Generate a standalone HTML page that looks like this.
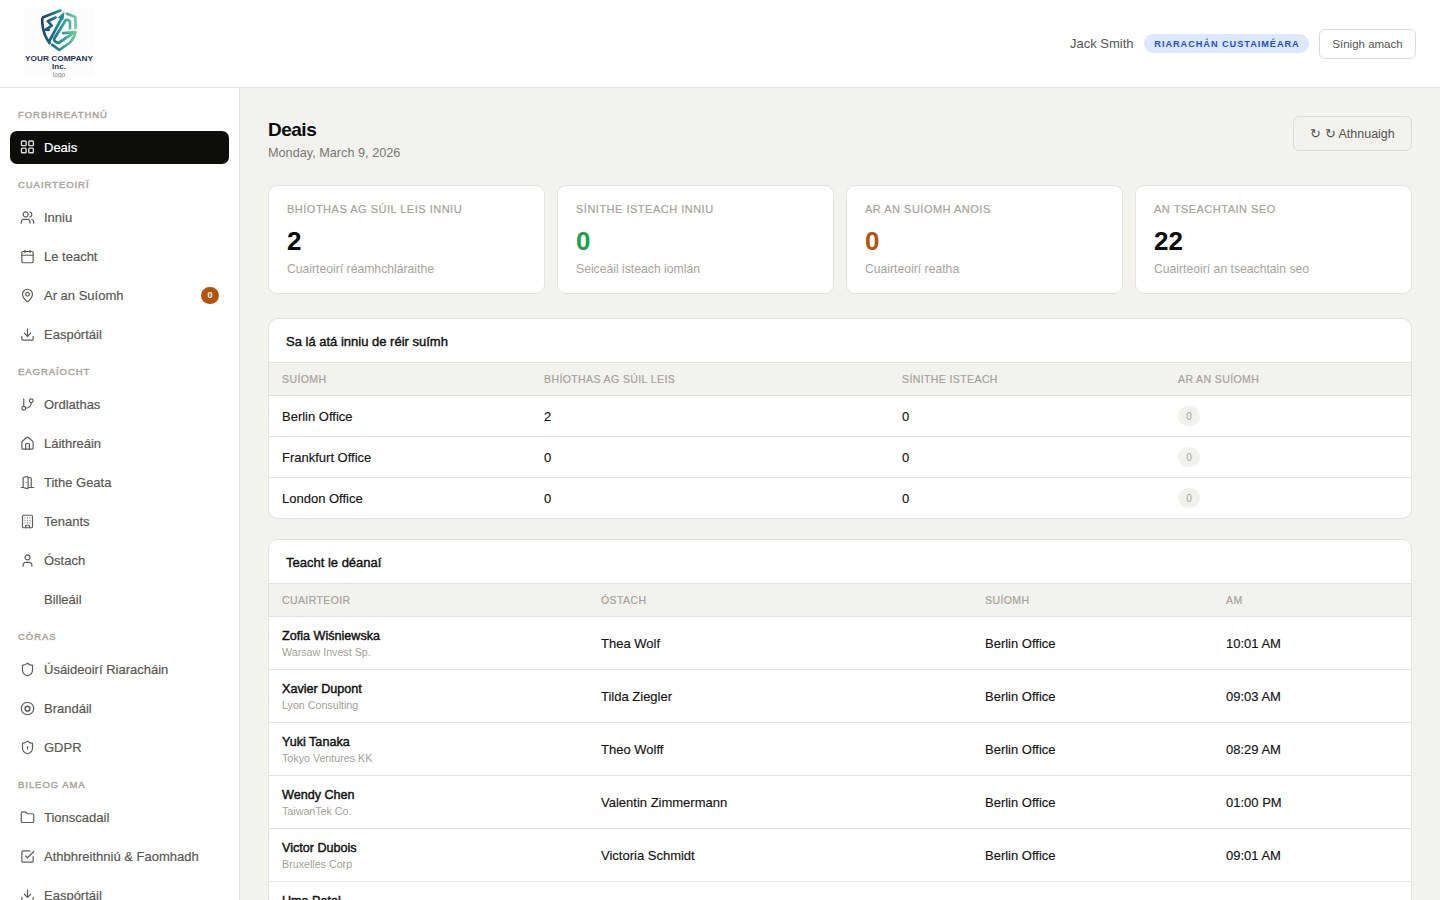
<!DOCTYPE html>
<html><head><meta charset="utf-8">
<style>
*{box-sizing:border-box;margin:0;padding:0}
html,body{width:1440px;height:900px;overflow:hidden;background:#f2f2ee;font-family:"Liberation Sans",sans-serif;color:#111}
.hdr{position:absolute;left:0;top:0;width:1440px;height:88px;background:#fff;border-bottom:1px solid #e3e2dd}
.logo{position:absolute;left:24px;top:8px;width:70px;height:70px;background:#fcfcfc}
.user{position:absolute;left:1070px;top:35px;font-size:13px;color:#555;line-height:17px}
.role{position:absolute;left:1144px;top:34px;width:165px;height:19px;border-radius:10px;background:#dbe8fd;color:#1d4ed8;font-size:9.2px;font-weight:bold;letter-spacing:0.95px;line-height:20px;padding-left:1px;text-align:center;-webkit-text-stroke:0}
.signout{position:absolute;left:1319px;top:29px;width:97px;height:30px;border:1px solid #dedcd6;border-radius:6px;font-size:11.5px;color:#555;line-height:28px;text-align:center;background:#fff}
.side{position:absolute;left:0;top:88px;width:240px;height:812px;background:#fff;border-right:1px solid #e3e2dd;padding:6px 10px 0 10px}
.lab{height:21px;line-height:21px;margin-top:10px;padding-left:8px;font-size:9.5px;font-weight:normal;letter-spacing:0.95px;color:#aca69d;-webkit-text-stroke:0.45px #aca69d}
.it{position:relative;height:33px;margin-top:6px;border-radius:7px;font-size:13px;line-height:33px;-webkit-text-stroke:0.2px currentColor;padding-left:34px;color:#595853}
.it svg{position:absolute;left:10px;top:9px;width:15px;height:15px;fill:none;stroke:#5d5c58;stroke-width:1.9;stroke-linecap:round;stroke-linejoin:round}
.it.act{background:#0d0d0c;color:#fff}
.it.act svg{stroke:#dcdcdc}
.badge{position:absolute;left:191px;top:8px;width:18px;height:17px;border-radius:9px;background:#b4530a;color:#fff;font-size:9px;font-weight:bold;line-height:17px;text-align:center;-webkit-text-stroke:0}
.main{position:absolute;left:240px;top:88px;width:1200px;height:812px;padding:28px}
.title{position:absolute;left:28px;top:29.5px;font-size:19px;letter-spacing:-0.5px;font-weight:bold;line-height:24px;color:#0b0b0b}
.date{position:absolute;left:28px;top:57px;font-size:12.7px;line-height:17px;color:#7a7872}
.refresh{position:absolute;left:1053px;top:28px;width:119px;height:35px;border:1px solid #dedcd6;border-radius:6px;font-size:12.5px;line-height:35px;text-align:center;color:#55534e}
.stats{position:absolute;left:28px;top:97px;width:1144px;height:109px}
.stat{position:absolute;top:0;width:277px;height:109px;background:#fff;border:1px solid #e3e2dd;border-radius:9px}
.stat .l{position:absolute;left:18px;top:16px;font-size:11px;letter-spacing:0.5px;color:#a7a39b;line-height:14px;-webkit-text-stroke:0.2px #a7a39b}
.stat .v{position:absolute;left:18px;top:40px;font-size:26px;font-weight:bold;line-height:30px;color:#0b0b0b}
.stat .s{position:absolute;left:18px;top:76px;font-size:12.2px;line-height:15px;color:#a7a39b}
.card{position:absolute;left:28px;width:1144px;background:#fff;border:1px solid #e3e2dd;border-radius:10px;overflow:hidden}
.ct{height:43px;line-height:45px;padding-left:17px;font-size:13px;font-weight:normal;color:#111;-webkit-text-stroke:0.4px #111}
table{border-collapse:collapse;width:100%;table-layout:fixed}
th{height:33px;background:#f2f2ee;border-top:1px solid #e3e2dd;border-bottom:1px solid #e3e2dd;text-align:left;padding-left:13px;font-size:10.5px;font-weight:normal;letter-spacing:0.4px;color:#a7a39b;-webkit-text-stroke:0.2px #a7a39b}
td{border-bottom:1px solid #e3e2dd;padding-left:13px;font-size:13px;color:#141414;-webkit-text-stroke:0.15px #141414}
.t1 td{height:41px}
.t2 td{height:53px}
.nm{font-size:12.6px;font-weight:normal;line-height:15px;margin-top:1px;-webkit-text-stroke:0.45px #141414}
.co{font-size:10.7px;color:#a39f97;line-height:14px;margin-top:1px;-webkit-text-stroke:0}
.zp{display:inline-block;width:22px;height:20px;border-radius:10px;background:#f1f1ed;color:#a7a39b;font-size:10px;line-height:21px;text-align:center;-webkit-text-stroke:0}
</style></head><body>
<div class="hdr">
  <div class="logo"><svg width="70" height="70" viewBox="0 0 70 70">
<defs><linearGradient id="g1" x1="17" y1="0" x2="53" y2="0" gradientUnits="userSpaceOnUse"><stop offset="0" stop-color="#1b3a6e"/><stop offset="0.5" stop-color="#1f8a95"/><stop offset="1" stop-color="#72d39c"/></linearGradient></defs>
<g transform="translate(0,1)"><g fill="none" stroke="url(#g1)" stroke-width="2.7" stroke-linecap="round" stroke-linejoin="round">
<path d="M36.4 1.6 L19.2 8.2 Q18 9 18.3 14 C19 22 21.5 29 25.7 34.2"/>
<path d="M31.6 8.6 L23.8 12.2 L27.8 16.6 L21.8 20.6 L24.6 20.8"/>
<path d="M25.4 32 L38.6 7.5"/>
<path d="M42 10.8 L30.2 29.8 Q29.6 32.5 34.5 34 L48.6 24.7"/>
<path d="M39.2 24.2 L51.3 23.2"/>
<path d="M43.5 10.8 L46 12.4 L46 19.4"/>
<path d="M43 4.8 L51.3 8 L51.6 19"/>
<path d="M28.4 35.8 L35.3 41 L45.5 34 Q50.5 29 51.3 23.5"/>
</g>
<path d="M33.8 8.6 L40.6 2.8 L39.3 11.2 Z" fill="#1f8a95"/></g>
<text x="35" y="53" text-anchor="middle" font-family="Liberation Sans" font-weight="bold" font-size="8" fill="#1d3558" textLength="68" lengthAdjust="spacingAndGlyphs">YOUR COMPANY</text>
<text x="35" y="61" text-anchor="middle" font-family="Liberation Sans" font-weight="bold" font-size="8" fill="#1d3558">Inc.</text>
<text x="35" y="69" text-anchor="middle" font-family="Liberation Sans" font-size="6.5" fill="#7f848b">logo</text>
</svg></div>
  <div class="user">Jack Smith</div>
  <div class="role">RIARACHÁN CUSTAIMÉARA</div>
  <div class="signout">Sínigh amach</div>
</div>
<div class="side">
  <div class="lab">FORBHREATHNÚ</div>
  <div class="it act"><svg viewBox="0 0 16 16" style="stroke-width:1.4;width:16px;height:16px;top:8.2px"><rect x="1.5" y="2" width="4.6" height="4.6" rx="0.8"/><rect x="8.8" y="2" width="4.6" height="4.6" rx="0.8"/><rect x="8.8" y="9.1" width="4.6" height="4.6" rx="0.8"/><rect x="1.5" y="9.1" width="4.6" height="4.6" rx="0.8"/></svg>Deais</div>
  <div class="lab">CUAIRTEOIRÍ</div>
  <div class="it"><svg viewBox="0 0 24 24"><path d="M16 21v-2a4 4 0 0 0-4-4H6a4 4 0 0 0-4 4v2"/><circle cx="9" cy="7" r="4"/><path d="M22 21v-2a4 4 0 0 0-3-3.87"/><path d="M16 3.13a4 4 0 0 1 0 7.75"/></svg>Inniu</div>
  <div class="it"><svg viewBox="0 0 24 24"><path d="M8 2v4"/><path d="M16 2v4"/><rect x="3" y="4" width="18" height="18" rx="2"/><path d="M3 10h18"/></svg>Le teacht</div>
  <div class="it"><svg viewBox="0 0 24 24"><path d="M20 10c0 4.993-5.539 10.193-7.399 11.799a1 1 0 0 1-1.202 0C9.539 20.193 4 14.993 4 10a8 8 0 0 1 16 0"/><circle cx="12" cy="10" r="3"/></svg>Ar an Suíomh<span class="badge">0</span></div>
  <div class="it"><svg viewBox="0 0 24 24"><path d="M21 15v4a2 2 0 0 1-2 2H5a2 2 0 0 1-2-2v-4"/><path d="m7 10 5 5 5-5"/><path d="M12 15V3"/></svg>Easpórtáil</div>
  <div class="lab">EAGRAÍOCHT</div>
  <div class="it"><svg viewBox="0 0 24 24"><path d="M6 3v12"/><circle cx="18" cy="6" r="3"/><circle cx="6" cy="18" r="3"/><path d="M18 9a9 9 0 0 1-9 9"/></svg>Ordlathas</div>
  <div class="it"><svg viewBox="0 0 24 24"><path d="M15 21v-8a1 1 0 0 0-1-1h-4a1 1 0 0 0-1 1v8"/><path d="M3 10a2 2 0 0 1 .709-1.528l7-5.999a2 2 0 0 1 2.582 0l7 5.999A2 2 0 0 1 21 10v9a2 2 0 0 1-2 2H5a2 2 0 0 1-2-2z"/></svg>Láithreáin</div>
  <div class="it"><svg viewBox="0 0 24 24"><path d="M13 4h3a2 2 0 0 1 2 2v14"/><path d="M2 20h3"/><path d="M13 20h9"/><path d="M10 12v.01"/><path d="M13 4.562v16.157a1 1 0 0 1-1.242.97L5 20V5.562a2 2 0 0 1 1.515-1.94l4-1A2 2 0 0 1 13 4.561Z"/></svg>Tithe Geata</div>
  <div class="it"><svg viewBox="0 0 24 24"><rect x="4" y="2" width="16" height="20" rx="2"/><path d="M9 22v-4h6v4"/><path d="M8 6h.01"/><path d="M16 6h.01"/><path d="M12 6h.01"/><path d="M12 10h.01"/><path d="M12 14h.01"/><path d="M16 10h.01"/><path d="M16 14h.01"/><path d="M8 10h.01"/><path d="M8 14h.01"/></svg>Tenants</div>
  <div class="it"><svg viewBox="0 0 24 24"><path d="M19 21v-2a4 4 0 0 0-4-4H9a4 4 0 0 0-4 4v2"/><circle cx="12" cy="7" r="4"/></svg>Óstach</div>
  <div class="it">Billeáil</div>
  <div class="lab">CÓRAS</div>
  <div class="it"><svg viewBox="0 0 24 24"><path d="M20 13c0 5-3.5 7.5-7.66 8.95a1 1 0 0 1-.67-.01C7.5 20.5 4 18 4 13V6a1 1 0 0 1 1-1c2 0 4.5-1.2 6.24-2.72a1.17 1.17 0 0 1 1.52 0C14.51 3.81 17 5 19 5a1 1 0 0 1 1 1z"/></svg>Úsáideoirí Riaracháin</div>
  <div class="it"><svg viewBox="0 0 24 24"><circle cx="12" cy="12" r="10"/><circle cx="12" cy="12.3" r="3.8" stroke-width="2.4"/></svg>Brandáil</div>
  <div class="it"><svg viewBox="0 0 24 24"><path d="M20 13c0 5-3.5 7.5-7.66 8.95a1 1 0 0 1-.67-.01C7.5 20.5 4 18 4 13V6a1 1 0 0 1 1-1c2 0 4.5-1.2 6.24-2.72a1.17 1.17 0 0 1 1.52 0C14.51 3.81 17 5 19 5a1 1 0 0 1 1 1z"/><circle cx="12" cy="11.2" r="1.4" fill="#5d5c58" stroke="none"/><path d="M12 12v2.6" stroke-width="1.6"/></svg>GDPR</div>
  <div class="lab">BILEOG AMA</div>
  <div class="it"><svg viewBox="0 0 24 24"><path d="M20 20a2 2 0 0 0 2-2V8a2 2 0 0 0-2-2h-7.9a2 2 0 0 1-1.69-.9L9.6 3.9A2 2 0 0 0 7.93 3H4a2 2 0 0 0-2 2v13a2 2 0 0 0 2 2Z"/></svg>Tionscadail</div>
  <div class="it"><svg viewBox="0 0 24 24"><path d="m9 11 3 3L22 4"/><path d="M21 12v7a2 2 0 0 1-2 2H5a2 2 0 0 1-2-2V5a2 2 0 0 1 2-2h11"/></svg>Athbhreithniú &amp; Faomhadh</div>
  <div class="it"><svg viewBox="0 0 24 24"><path d="M21 15v4a2 2 0 0 1-2 2H5a2 2 0 0 1-2-2v-4"/><path d="m7 10 5 5 5-5"/><path d="M12 15V3"/></svg>Easpórtáil</div>
</div>
<div class="main">
  <div class="title">Deais</div>
  <div class="date">Monday, March 9, 2026</div>
  <div class="refresh">↻ ↻ Athnuaigh</div>
  <div class="stats">
    <div class="stat" style="left:0"><div class="l">BHÍOTHAS AG SÚIL LEIS INNIU</div><div class="v">2</div><div class="s">Cuairteoirí réamhchláraithe</div></div>
    <div class="stat" style="left:289px"><div class="l">SÍNITHE ISTEACH INNIU</div><div class="v" style="color:#16a34a">0</div><div class="s">Seiceáil isteach iomlán</div></div>
    <div class="stat" style="left:578px"><div class="l">AR AN SUÍOMH ANOIS</div><div class="v" style="color:#b4530a">0</div><div class="s">Cuairteoirí reatha</div></div>
    <div class="stat" style="left:867px"><div class="l">AN TSEACHTAIN SEO</div><div class="v">22</div><div class="s">Cuairteoirí an tseachtain seo</div></div>
  </div>
  <div class="card t1" style="top:230px;height:201px">
    <div class="ct">Sa lá atá inniu de réir suímh</div>
    <table>
      <colgroup><col style="width:262px"><col style="width:358px"><col style="width:276px"><col></colgroup>
      <tr><th>SUÍOMH</th><th>BHÍOTHAS AG SÚIL LEIS</th><th>SÍNITHE ISTEACH</th><th>AR AN SUÍOMH</th></tr>
      <tr><td>Berlin Office</td><td>2</td><td>0</td><td><span class="zp">0</span></td></tr>
      <tr><td>Frankfurt Office</td><td>0</td><td>0</td><td><span class="zp">0</span></td></tr>
      <tr><td style="border-bottom:0">London Office</td><td style="border-bottom:0">0</td><td style="border-bottom:0">0</td><td style="border-bottom:0"><span class="zp">0</span></td></tr>
    </table>
  </div>
  <div class="card t2" style="top:451px;height:400px">
    <div class="ct">Teacht le déanaí</div>
    <table>
      <colgroup><col style="width:319px"><col style="width:384px"><col style="width:241px"><col></colgroup>
      <tr><th>CUAIRTEOIR</th><th>ÓSTACH</th><th>SUÍOMH</th><th>AM</th></tr>
      <tr><td><div class="nm">Zofia Wiśniewska</div><div class="co">Warsaw Invest Sp.</div></td><td>Thea Wolf</td><td>Berlin Office</td><td>10:01 AM</td></tr>
      <tr><td><div class="nm">Xavier Dupont</div><div class="co">Lyon Consulting</div></td><td>Tilda Ziegler</td><td>Berlin Office</td><td>09:03 AM</td></tr>
      <tr><td><div class="nm">Yuki Tanaka</div><div class="co">Tokyo Ventures KK</div></td><td>Theo Wolff</td><td>Berlin Office</td><td>08:29 AM</td></tr>
      <tr><td><div class="nm">Wendy Chen</div><div class="co">TaiwanTek Co.</div></td><td>Valentin Zimmermann</td><td>Berlin Office</td><td>01:00 PM</td></tr>
      <tr><td><div class="nm">Victor Dubois</div><div class="co">Bruxelles Corp</div></td><td>Victoria Schmidt</td><td>Berlin Office</td><td>09:01 AM</td></tr>
      <tr><td><div class="nm">Uma Patel</div><div class="co">Mumbai Tech Pvt</div></td><td>Thea Wolf</td><td>Berlin Office</td><td>09:00 AM</td></tr>
    </table>
  </div>
</div>
</body></html>
